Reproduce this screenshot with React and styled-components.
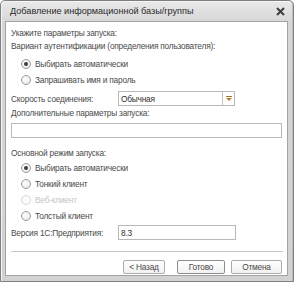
import React from "react";
import styled, { createGlobalStyle } from "styled-components";

const Global = createGlobalStyle`
  html, body { margin: 0; padding: 0; background: #ffffff; }
  body { font-family: "Liberation Sans", Arial, sans-serif; }
`;

const Window = styled.div`
  box-sizing: border-box;
  width: 294px;
  height: 282px;
  border: 1px solid #7f7f7f;
  border-radius: 5px 5px 0 0;
  background: linear-gradient(#e9e9e9, #d6d6d6 22px, #d2d2d2);
  box-shadow: inset 1px 1px 0 #f6f6f6, inset -1px 0 0 #bdbdbd;
  padding: 0 5px 5px 4px;
  display: flex;
  flex-direction: column;
`;

const TitleBar = styled.div`
  height: 20px;
  display: flex;
  align-items: center;
  justify-content: space-between;
  padding: 0 3px 0 5px;
  font-size: 9.1px;
  color: #2a2a2a;
`;

const Client = styled.div`
  flex: 1;
  border: 1px solid #a3a3a3;
  background: #ffffff;
  padding: 5px 4px 0 5px;
  display: flex;
  flex-direction: column;
  font-size: 8.3px;
  letter-spacing: -0.2px;
  color: #4a4a4a;
`;

const Line = styled.div`
  height: 13px;
  line-height: 13px;
  margin-top: ${(p) => p.$mt || 0}px;
  white-space: nowrap;
`;

const RadioRow = styled.div`
  height: 16px;
  display: flex;
  align-items: center;
  padding-left: 10px;
  gap: 4px;
  margin-top: ${(p) => p.$mt || 0}px;
  color: ${(p) => (p.$disabled ? "#c4c4c4" : "#4a4a4a")};
  white-space: nowrap;
`;

const RadioCircle = styled.span`
  box-sizing: border-box;
  width: 10px;
  height: 10px;
  border-radius: 50%;
  border: 1px solid ${(p) => (p.$disabled ? "#dadada" : "#9a9a9a")};
  background: ${(p) =>
    p.$disabled ? "#fafafa" : "radial-gradient(circle at 40% 35%, #ffffff, #e6e6e6)"};
  display: flex;
  align-items: center;
  justify-content: center;
  &::after {
    content: "";
    display: ${(p) => (p.$checked ? "block" : "none")};
    width: 4px;
    height: 4px;
    border-radius: 50%;
    background: #3c3c3c;
  }
`;

const FieldRow = styled.div`
  height: 15px;
  display: flex;
  align-items: center;
  margin-top: ${(p) => p.$mt || 0}px;
`;

const FieldLabel = styled.div`
  width: 107px;
  white-space: nowrap;
`;

const Box = styled.div`
  box-sizing: border-box;
  width: ${(p) => p.$w}px;
  height: 15px;
  border: 1px solid #b8b8b8;
  background: #fff;
  display: flex;
  align-items: center;
  color: #2e2e2e;
  padding-left: 2px;
  margin-top: ${(p) => p.$mt || 0}px;
`;

const BoxText = styled.span`
  flex: 1;
`;

const DropButton = styled.div`
  width: 11px;
  height: 100%;
  border-left: 1px solid #c4c4c4;
  display: flex;
  align-items: center;
  justify-content: center;
`;

const Separator = styled.div`
  height: 1px;
  background: #c9c9c9;
  margin-top: ${(p) => p.$mt || 0}px;
`;

const ButtonBar = styled.div`
  display: flex;
  justify-content: flex-end;
  margin-top: 8px;
  padding-right: 1px;
`;

const Button = styled.div`
  box-sizing: border-box;
  width: ${(p) => p.$w}px;
  height: 14px;
  margin-left: ${(p) => p.$ml || 0}px;
  border: 1px solid ${(p) => (p.$default ? "#8e8e8e" : "#acacac")};
  border-radius: 2px;
  background: linear-gradient(#ffffff, #f1f1f1);
  display: flex;
  align-items: center;
  justify-content: center;
  color: #4a4a4a;
  white-space: nowrap;
`;

const Radio = ({ checked, disabled, children, mt }) => (
  <RadioRow $disabled={disabled} $mt={mt}>
    <RadioCircle $checked={checked} $disabled={disabled} />
    {children}
  </RadioRow>
);

export default function App() {
  return (
    <>
      <Global />
      <Window>
        <TitleBar>
          <span>Добавление информационной базы/группы</span>
          <svg width="9" height="9" viewBox="0 0 9 9">
            <path d="M1 1 L8 8 M8 1 L1 8" stroke="#3d3d3d" strokeWidth="2" />
          </svg>
        </TitleBar>
        <Client>
          <Line>Укажите параметры запуска:</Line>
          <Line>Вариант аутентификации (определения пользователя):</Line>
          <Radio checked mt={3}>Выбирать автоматически</Radio>
          <Radio>Запрашивать имя и пароль</Radio>
          <FieldRow $mt={3}>
            <FieldLabel>Скорость соединения:</FieldLabel>
            <Box $w={117}>
              <BoxText>Обычная</BoxText>
              <DropButton>
                <svg width="6" height="5" viewBox="0 0 6 5">
                  <rect x="0" y="0" width="6" height="1" fill="#a57a22" />
                  <path d="M0 2 H6 L3 5 Z" fill="#b8862a" />
                </svg>
              </DropButton>
            </Box>
          </FieldRow>
          <Line $mt={1}>Дополнительные параметры запуска:</Line>
          <Box $w={271} $mt={3} />
          <Line $mt={9}>Основной режим запуска:</Line>
          <Radio checked>Выбирать автоматически</Radio>
          <Radio>Тонкий клиент</Radio>
          <Radio disabled>Веб-клиент</Radio>
          <Radio>Толстый клиент</Radio>
          <FieldRow $mt={1}>
            <FieldLabel>Версия 1С:Предприятия:</FieldLabel>
            <Box $w={118}>
              <BoxText>8.3</BoxText>
            </Box>
          </FieldRow>
          <Separator $mt={11} />
          <ButtonBar>
            <Button $w={42}>&lt; Назад</Button>
            <Button $w={48} $ml={12} $default>Готово</Button>
            <Button $w={51} $ml={6}>Отмена</Button>
          </ButtonBar>
        </Client>
      </Window>
    </>
  );
}
